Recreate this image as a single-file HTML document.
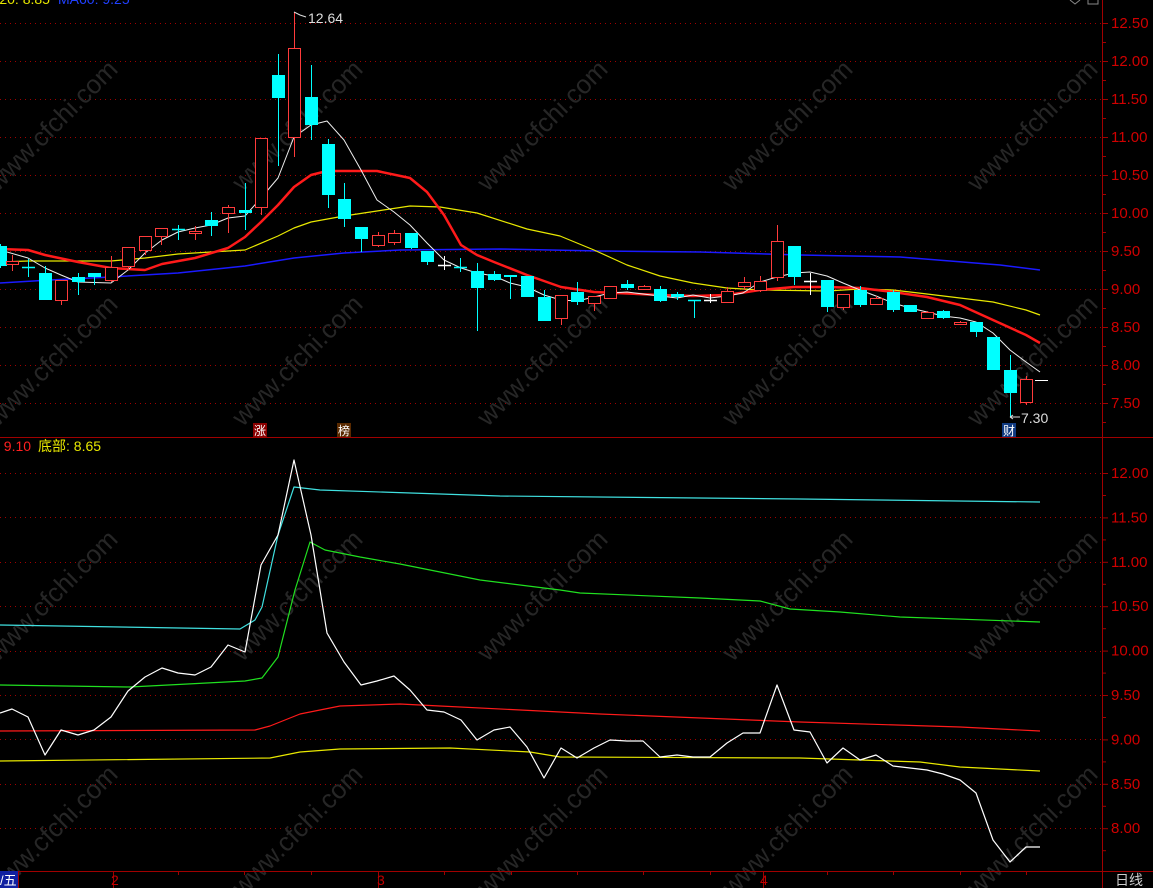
<!DOCTYPE html>
<html><head><meta charset="utf-8"><style>
html,body{margin:0;padding:0;background:#000;width:1153px;height:888px;overflow:hidden}
svg{display:block}
text{font-family:"Liberation Sans","Noto Sans CJK SC",sans-serif}
</style></head><body>
<svg id="s" width="1153" height="888" xmlns="http://www.w3.org/2000/svg">
<rect width="1153" height="888" fill="#000"/>
<g id="grid" stroke="#a00000" stroke-dasharray="1,4" stroke-width="1"></g>
<g id="wm" fill="#262626" font-size="26"></g>
<g id="ma" fill="none"></g>
<g id="cd"></g>
<g id="lo" fill="none"></g>
<line x1="1102.5" y1="0" x2="1102.5" y2="888" stroke="#a00000"/>
<line x1="0" y1="437.5" x2="1153" y2="437.5" stroke="#a00000"/>
<line x1="0" y1="871.5" x2="1153" y2="871.5" stroke="#a00000"/>
<g id="ax" fill="#d00000" font-size="15"></g>
<g stroke="#a00000" id="ticks"></g>
<text x="-10" y="4" font-size="14" fill="#e8e800">A20: 8.85</text>
<text x="58" y="4" font-size="14" fill="#2040ff">MA60: 9.25</text>
<text x="-4" y="451" font-size="14" fill="#ff2020">: 9.10</text>
<text x="38" y="451" font-size="14" fill="#e8e800">底部: 8.65</text>
<path d="M294 12 L300 15 L306 17" stroke="#ddd" fill="none"/>
<text x="308" y="23" font-size="14" fill="#ddd">12.64</text>
<path d="M1010 417 L1020 417 M1010 417 l3 -2 M1010 417 l3 2" stroke="#ddd" fill="none"/>
<text x="1021" y="423" font-size="14" fill="#ddd">7.30</text>
<rect x="253" y="423" width="14" height="14" fill="#8a0000"/><text x="254" y="435" font-size="12" fill="#fff">涨</text>
<rect x="337" y="423" width="14" height="14" fill="#5a2a00"/><text x="338" y="435" font-size="12" fill="#fff">榜</text>
<rect x="1002" y="423" width="14" height="14" fill="#103a80"/><text x="1003" y="435" font-size="12" fill="#fff">财</text>
<rect x="0" y="871" width="18" height="17" fill="#1020a0"/><text x="0" y="885" font-size="13" fill="#fff">/五</text>
<text x="111" y="885" font-size="14" fill="#c00000">2</text>
<text x="377" y="885" font-size="14" fill="#c00000">3</text>
<text x="760" y="885" font-size="14" fill="#c00000">4</text>
<text x="1115" y="885" font-size="14" fill="#ccc">日线</text>
<path d="M1070 0 l5 4 l5 -4" stroke="#888" fill="none"/>
<rect x="1088" y="-4" width="10" height="8" stroke="#888" fill="none"/>
</svg>
<script>
var NS="http://www.w3.org/2000/svg";
function el(p,t,a,txt){var e=document.createElementNS(NS,t);for(var k in a)e.setAttribute(k,a[k]);if(txt)e.textContent=txt;document.getElementById(p).appendChild(e);return e;}
var gy=[23,61,99,137,175,213,251,289,327,365,403,473,517,562,606,651,695,739,784,828];
gy.forEach(function(y){el("grid","line",{x1:0,x2:1102,y1:y+.5,y2:y+.5});});
var tl=["12.50","12.00","11.50","11.00","10.50","10.00","9.50","9.00","8.50","8.00","7.50"];
tl.forEach(function(t,i){var y=23+i*38;el("ax","text",{x:1111,y:y+5},t);el("ticks","line",{x1:1102,x2:1108,y1:y+.5,y2:y+.5});el("ticks","line",{x1:1102,x2:1106,y1:y+19.5,y2:y+19.5});});
var bl=["12.00","11.50","11.00","10.50","10.00","9.50","9.00","8.50","8.00"];
bl.forEach(function(t,i){var y=473+i*44.4;el("ax","text",{x:1111,y:y+5},t);el("ticks","line",{x1:1102,x2:1108,y1:y+.5,y2:y+.5});el("ticks","line",{x1:1102,x2:1106,y1:y+22.5,y2:y+22.5});});
[18,113,178,244,311,378,444,511,577,643,710,763,827,893,960,1026].forEach(function(x){el("ticks","line",{x1:x+.5,x2:x+.5,y1:871,y2:x==113||x==378||x==763||x==18?888:875});});
for(var r=0;r<4;r++)for(var c=0;c<5;c++){var x=-20+c*245,y=150+r*235;el("wm","text",{x:x,y:y,transform:"rotate(-45 "+(x+60)+" "+y+")"},"www.cfchi.com");}
function pl(g,pts,col,w){el(g,"polyline",{points:pts,stroke:col,"stroke-width":w,"stroke-linejoin":"round"});}
pl("ma","0,283 50,280 111,277 178,273 245,266 294,258 344,253 400,250 500,249 600,251 700,252 800,255 900,257 1000,265 1040,270","#1a1aff",1.5);
pl("ma","0,262 28,261 111,261 145,258 178,254 211,252 245,250 278,236 294,228 311,222 344,216 377,211 410,206 440,207 477,213 527,229 560,236 594,250 627,265 660,276 693,283 727,288 760,290 827,291 860,289 893,290 927,294 960,298 993,302 1026,310 1040,315","#e8e800",1.2);
pl("ma","0,249 28,250 45,255 78,262 111,268 145,270 162,264 195,258 228,248 245,237 261,222 278,205 294,187 311,175 327,171 377,171 410,178 427,192 444,215 461,245 477,255 494,262 527,275 561,287 594,292 660,295 693,296 727,295 760,290 794,287 827,287 860,288 893,292 927,297 960,305 993,320 1026,335 1040,343","#ff1a1a",2.5);
pl("ma","0,250 28,258 45,268 61,275 78,282 111,283 128,270 145,253 162,240 178,232 195,228 211,225 228,218 245,216 261,198 278,178 294,137 311,125 327,121 344,140 361,170 377,200 394,212 410,225 427,243 444,260 461,268 477,273 494,276 510,283 527,287 544,295 561,300 577,301 594,297 610,293 627,292 643,294 660,296 677,298 693,295 710,298 727,296 743,293 760,282 777,277 794,273 810,272 827,276 843,283 860,290 876,296 893,303 910,308 927,312 943,316 960,318 976,322 993,333 1010,350 1026,362 1040,372","#eee",1);
var C=[[0,246,266,244,268,"c"],[12,261,264,255,271,"r"],[28,267,267,259,277,"c"],[45,273,300,266,300,"c"],[61,280,300,280,305,"r"],[78,277,282,273,295,"c"],[94,273,277,273,285,"c"],[111,267,280,256,282,"r"],[128,247,266,247,270,"r"],[145,236,250,236,255,"r"],[161,228,236,228,245,"r"],[178,229,229,225,240,"c"],[195,231,233,226,240,"r"],[211,220,226,212,236,"c"],[228,207,213,205,233,"r"],[245,210,213,183,230,"c"],[261,138,207,138,215,"r"],[278,75,98,54,166,"c"],[294,48,137,12,157,"r"],[311,97,125,65,140,"c"],[328,144,195,139,208,"c"],[344,199,219,183,227,"c"],[361,227,239,227,252,"c"],[378,235,245,232,247,"r"],[394,233,242,230,245,"r"],[411,233,248,233,249,"c"],[427,251,262,251,265,"c"],[444,265,265,256,270,"w"],[460,267,267,258,272,"c"],[477,271,288,263,331,"c"],[494,274,280,271,281,"c"],[510,275,277,275,299,"c"],[527,276,297,276,297,"c"],[544,297,321,290,321,"c"],[561,295,318,295,325,"r"],[577,292,302,282,305,"c"],[594,296,303,296,311,"r"],[610,286,298,286,298,"r"],[627,284,288,280,290,"c"],[644,286,289,285,290,"r"],[660,289,301,286,302,"c"],[677,294,297,292,300,"c"],[694,300,301,300,318,"c"],[710,300,300,294,303,"w"],[727,291,302,287,303,"r"],[744,282,286,277,290,"r"],[760,281,290,276,292,"r"],[777,241,277,225,281,"r"],[794,246,277,246,285,"c"],[810,281,281,273,295,"w"],[827,280,307,280,312,"c"],[843,294,307,294,310,"r"],[860,290,305,286,307,"c"],[876,298,304,296,305,"r"],[893,292,310,290,312,"c"],[910,305,312,305,312,"c"],[927,312,318,311,319,"r"],[943,311,318,310,319,"c"],[960,322,324,321,325,"r"],[976,322,332,322,337,"c"],[993,337,370,337,370,"c"],[1010,370,393,355,417,"c"],[1026,379,402,376,405,"r"]];
C.forEach(function(d){var x=d[0],col=d[5]=="r"?"#ff3b3b":d[5]=="w"?"#fff":"#00ffff";
 el("cd","line",{x1:x+.5,x2:x+.5,y1:d[3],y2:d[4],stroke:col});
 var h=d[2]-d[1];
 if(h<2){el("cd","line",{x1:x-6,x2:x+7,y1:d[1]+.5,y2:d[1]+.5,stroke:col,"stroke-width":1.5});}
 else if(d[5]=="r"){el("cd","rect",{x:x-5.5,y:d[1]+.5,width:12,height:h,fill:"#000",stroke:col});}
 else el("cd","rect",{x:x-6,y:d[1],width:13,height:h,fill:col});
});
el("cd","line",{x1:1035,x2:1048,y1:380.5,y2:380.5,stroke:"#fff"});
pl("lo","0,761 270,758 300,752 340,749 450,748 530,752 560,757 800,758 920,762 960,767 1040,771","#e8e800",1.2);
pl("lo","0,731 255,730 270,726 300,714 340,706 400,704 440,706 600,714 800,722 960,727 1040,731","#ff1a1a",1.2);
pl("lo","0,685 130,687 245,681 262,678 278,657 295,590 310,542 325,550 360,557 400,564 440,572 480,580 520,585 560,590 580,593 700,598 760,601 790,609 840,612 900,617 1040,622","#20e020",1.2);
pl("lo","0,625 240,629 255,620 262,607 278,535 294,487 320,490 500,496 800,499 1040,502","#40e0e0",1.2);
pl("lo","0,713 12,709 28,717 45,755 61,730 78,735 94,730 111,717 128,691 145,677 162,668 178,673 195,675 211,667 228,645 245,652 261,565 278,535 294,460 311,535 327,633 344,662 361,685 377,681 394,676 410,690 427,710 444,712 461,720 477,740 494,730 510,727 527,747 544,778 561,748 577,758 594,748 610,740 627,741 643,741 660,757 677,755 693,757 710,757 727,743 743,733 760,733 777,685 794,730 810,732 827,763 843,748 860,760 876,755 893,766 910,768 927,770 943,774 960,780 976,793 993,840 1010,862 1026,847 1040,847","#fff",1.2);
</script>
</body></html>
